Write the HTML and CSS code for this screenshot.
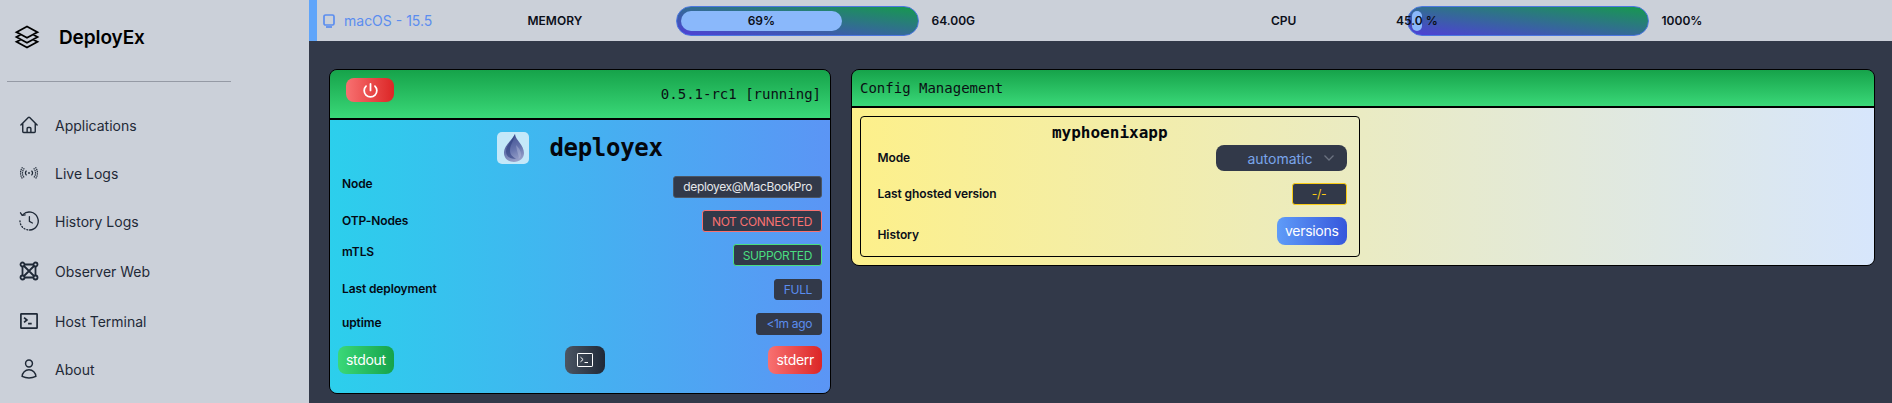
FILE: index.html
```html
<!DOCTYPE html>
<html lang="en">
<head>
<meta charset="utf-8">
<title>DeployEx</title>
<link rel="stylesheet" href="styles.css">
</head>
<body>
<div class="app">
  <aside class="sidebar">
    <div class="brand">
      <svg class="brand-icon" viewBox="0 0 24 24" fill="none" stroke="currentColor" stroke-width="1.6" stroke-linejoin="miter"><path d="M6.429 9.75 2.25 12l4.179 2.25m0-4.5 5.571 3 5.571-3m-11.142 0L2.25 7.5 12 2.25l9.75 5.25-4.179 2.25m0 0L21.75 12l-4.179 2.25m0 0 4.179 2.25L12 21.75 2.25 16.5l4.179-2.25m11.142 0-5.571 3-5.571-3"/></svg>
      <span class="brand-name">DeployEx</span>
    </div>
    <hr class="divider">
    <nav class="nav">
      <a class="nav-item">
        <svg class="nav-icon nav-icon--md" viewBox="0 0 24 24" fill="none" stroke="currentColor" stroke-width="1.7" stroke-linecap="round" stroke-linejoin="round"><path d="m2.25 12 8.954-8.955c.44-.439 1.152-.439 1.591 0L21.75 12M4.5 9.750v10.125c0 .621.504 1.125 1.125 1.125H9.750v-4.875c0-.621.504-1.125 1.125-1.125h2.250c.621 0 1.125.504 1.125 1.125V21h4.125c.621 0 1.125-.504 1.125-1.125V9.750M8.250 21h8.250"/></svg>
        <span>Applications</span>
      </a>
      <a class="nav-item">
        <svg class="nav-icon" viewBox="0 0 20 16" fill="none" stroke="currentColor" stroke-width="1.3"><circle cx="10" cy="8" r="1" fill="currentColor" stroke="none"/><path d="M7.2 5.4a3.8 3.8 0 0 0 0 5.2M12.8 5.4a3.8 3.8 0 0 1 0 5.2"/><path stroke-dasharray="1.6 .7" d="M4.8 2.8a7.6 7.6 0 0 0 0 10.4M15.2 2.8a7.6 7.6 0 0 1 0 10.4"/><path stroke-dasharray="1.6 .7" d="M2.8 1.6a10.5 10.5 0 0 0 0 12.8M17.2 1.6a10.5 10.5 0 0 1 0 12.8"/></svg>
        <span>Live Logs</span>
      </a>
      <a class="nav-item">
        <svg class="nav-icon nav-icon--md" viewBox="0 0 20 20" fill="none" stroke="currentColor" stroke-width="1.3" stroke-linecap="round" stroke-linejoin="round"><path d="M3.9 3.6A9 9 0 1 1 10.6 19"/><path stroke-dasharray="1 2" d="M8.8 18.9A9 9 0 0 1 1 9.4"/><path d="M1.5 1.8 3.2 4.4l3-.6"/><path d="M10.4 5.6v4.800l3 1.600"/></svg>
        <span>History Logs</span>
      </a>
      <a class="nav-item nav-item--tall">
        <svg class="nav-icon nav-icon--md" viewBox="0 0 20 20" fill="none" stroke="currentColor" stroke-width="1.8"><path d="M3.5 3.5h13v13h-13zM3.5 3.5l13 13M16.5 3.5l-13 13"/><circle cx="3.5" cy="3.5" r="2" fill="#cbd0d9"/><circle cx="16.5" cy="3.5" r="2" fill="#cbd0d9"/><circle cx="3.5" cy="16.5" r="2" fill="#cbd0d9"/><circle cx="16.5" cy="16.5" r="2" fill="#cbd0d9"/></svg>
        <span>Observer Web</span>
      </a>
      <a class="nav-item">
        <svg class="nav-icon" viewBox="0 0 20 18" fill="none" stroke="currentColor" stroke-width="1.9"><rect x="1" y="1" width="18" height="16" rx=".6"/><path d="m4.5 5.2 3.2 2.700-3.200 2.700M9 12h4"/></svg>
        <span>Host Terminal</span>
      </a>
      <a class="nav-item">
        <svg class="nav-icon nav-icon--lg" viewBox="0 0 24 24" fill="none" stroke="currentColor" stroke-width="1.6" stroke-linecap="round" stroke-linejoin="round"><path d="M15.75 6a3.75 3.75 0 1 1-7.5 0 3.75 3.75 0 0 1 7.5 0ZM4.501 20.118a7.5 7.5 0 0 1 14.998 0A17.933 17.933 0 0 1 12 21.75c-2.676 0-5.216-.584-7.499-1.632Z"/></svg>
        <span>About</span>
      </a>
    </nav>
  </aside>

  <main class="main">
    <header class="topbar">
      <div class="os">
        <svg class="os-icon" viewBox="0 0 12 14" fill="none" stroke="currentColor" stroke-width="1.7"><rect x="1" y="1" width="10" height="10" rx="1.6"/><path d="M3 13h6"/></svg>
        <span>macOS - 15.5</span>
      </div>
      <div class="stat-label">MEMORY</div>
      <div class="meter"><div class="meter-fill meter-fill--mem"><span>69%</span></div></div>
      <div class="stat-value">64.00G</div>
      <div class="stat-label">CPU</div>
      <div class="meter"><div class="meter-fill meter-fill--cpu"><span>45.0 %</span></div></div>
      <div class="stat-value">1000%</div>
    </header>

    <section class="content">
      <article class="card">
        <div class="card-header card-header--app">
          <button class="power">
            <svg viewBox="0 0 24 24" fill="none" stroke="#fff" stroke-width="2.2" stroke-linecap="round"><path d="M12 3.5v8.5"/><path d="M17.6 6.4a8 8 0 1 1-11.2 0"/></svg>
          </button>
          <span class="version">0.5.1-rc1 [running]</span>
        </div>
        <div class="app-body">
          <div class="app-title">
            <span class="app-logo">
              <svg viewBox="0 0 32 32"><defs><linearGradient id="drop" x1="0.3" y1="0" x2="0.6" y2="1"><stop offset="0" stop-color="#3f4f90"/><stop offset=".55" stop-color="#6674ad"/><stop offset="1" stop-color="#9aa3cb"/></linearGradient></defs><path fill="url(#drop)" d="M18 2c.5 6 9 11 9 19 0 5.500-4.500 9-10 9S7 26.500 7 21C7 13.500 14.500 9 18 2z"/><path fill="#2f3d7e" opacity=".6" d="M18 2c-.5 6-5 10.500-5 16.500 0 4 2.500 6.500 6 8-6.500 1-10-2.500-10-7C9 13 15.500 8.500 18 2z"/><path fill="#c4cce6" opacity=".35" d="M19 13c3 3 5 6 5 9.500 0 2-1 3.500-2.500 4.500 1-3.500-1.500-6-2.500-14z"/></svg>
            </span>
            <h1 class="app-name">deployex</h1>
          </div>
          <div class="row row--top"><span class="label">Node</span><span class="badge badge--node">deployex@MacBookPro</span></div>
          <div class="row"><span class="label">OTP-Nodes</span><span class="badge badge--red">NOT CONNECTED</span></div>
          <div class="row row--top"><span class="label">mTLS</span><span class="badge badge--green">SUPPORTED</span></div>
          <div class="row"><span class="label">Last deployment</span><span class="badge badge--blue">FULL</span></div>
          <div class="row"><span class="label">uptime</span><span class="badge badge--blue">&lt;1m ago</span></div>
          <div class="actions">
            <button class="btn btn--green">stdout</button>
            <button class="btn btn--dark">
              <svg viewBox="0 0 16 14" fill="none" stroke="#fff" stroke-width="1"><rect x=".5" y=".5" width="15" height="13" rx=".6"/><path d="m3.500 4.200 2.600 2.300-2.600 2.300M7.500 9.500h3.500"/></svg>
            </button>
            <button class="btn btn--red">stderr</button>
          </div>
        </div>
      </article>

      <article class="card card--config">
        <div class="card-header card-header--config">Config Management</div>
        <div class="config-body">
          <div class="app-panel">
            <h2 class="panel-title">myphoenixapp</h2>
            <div class="panel-rows">
              <div class="row row--panel"><span class="panel-label panel-label--high">Mode</span>
                <div class="select"><span>automatic</span>
                  <svg viewBox="0 0 12 8" fill="none" stroke="#6b7280" stroke-width="1.3"><path d="m1.500 1.500 4.500 4.500 4.500-4.500"/></svg>
                </div>
              </div>
              <div class="row row--panel"><span class="panel-label">Last ghosted version</span><span class="badge badge--yellow">-/-</span></div>
              <div class="row row--panel"><span class="panel-label panel-label--low">History</span><button class="btn btn--blue">versions</button></div>
            </div>
          </div>
        </div>
      </article>
    </section>
  </main>
</div>
</body>
</html>
```
FILE: styles.css
```css
* { box-sizing: border-box; }
html, body { margin: 0; padding: 0; height: 100%; overflow: hidden; }
body { font-family: Inter, "Liberation Sans", sans-serif; color: #000; background: #323949; }

.app { display: flex; height: 403px; }

/* Sidebar */
.sidebar { width: 309px; flex: none; background: #cbd0d9; color: #1f2937; }
.brand { display: flex; align-items: center; height: 74px; padding-left: 14px; gap: 19px; color: #000; }
.brand-icon { width: 26px; height: 26px; }
.brand-name { font-size: 19px; font-weight: 600; letter-spacing: -.1px; }
.divider { margin: 7px 0 19px 7px; width: 224px; height: 1px; border: 0; background: #959aa5; }
.nav { display: flex; flex-direction: column; }
.nav-item { display: flex; align-items: center; height: 48px; padding-left: 20px; gap: 17px; font-size: 14px; }
.nav-item--tall { height: 52px; }
.nav-icon { width: 18px; height: 18px; flex: none; overflow: visible; }
.nav-icon--md { width: 20px; height: 20px; margin: 0 -1px; }
.nav-icon--lg { width: 22px; height: 22px; margin: 0 -2px; }

/* Main */
.main { flex: 1; min-width: 0; display: flex; flex-direction: column; }

.topbar {
  display: grid;
  grid-template-columns: 210.5px 148.5px 243px 352px 136px 242px 1fr;
  align-items: center;
  height: 41px;
  background: #cbd0d9;
  border-left: 8px solid #60a5fa;
}
.os { display: flex; align-items: center; gap: 9px; padding-left: 6px; color: #5b8def; font-size: 14px; }
.os-icon { width: 12px; height: 14px; }
.stat-label, .stat-value { font-size: 12px; font-weight: 600; color: #0b0f19; }
.stat-value { padding-left: 12.5px; }
.meter {
  height: 30px;
  padding: 4px 4px;
  border: 1px solid #4c78e0;
  border-radius: 15px;
  background: linear-gradient(to top right, #4f3fd8, #16994e);
}
.meter-fill {
  display: flex; justify-content: center; align-items: center;
  height: 20px;
  background: #8ab8fb;
  border-radius: 10px;
  font-size: 12px; font-weight: 600; color: #0b0f19; white-space: nowrap;
}
.meter-fill--mem { width: 69%; }
.meter-fill--cpu { width: 4.2%; }

.content {
  flex: 1;
  display: grid;
  grid-template-columns: 502px 1fr;
  gap: 20px;
  align-items: start;
  padding: 28px 17px 0 20px;
}

/* Cards */
.card { border: 1px solid #000; border-radius: 8px; overflow: hidden; height: 325px; }
.card--config { height: 197px; }
.card-header { background: linear-gradient(to bottom, #16a34a, #3ad878); border-bottom: 2px solid #000; font-family: "DejaVu Sans Mono", monospace; font-size: 14px; color: #0a0f14; }
.card-header--app { height: 50px; display: flex; justify-content: space-between; padding: 8px 9px 0 16px; }
.card-header--config { height: 38px; display: flex; align-items: center; padding-left: 8px; }
.version { padding-top: 8px; }

.power { width: 48px; height: 24px; padding: 0; border: 0; border-radius: 8px; background: linear-gradient(to right, #f87171, #dc2626); display: flex; align-items: center; justify-content: center; }
.power svg { width: 19px; height: 19px; }

.app-body { height: 273px; padding: 12px 8px 0; background: linear-gradient(to right, #2ccfec, #5b95f5); }
.app-title { display: flex; justify-content: center; align-items: center; gap: 20px; height: 32px; margin-bottom: 12px; }
.app-logo { width: 32px; height: 32px; border-radius: 5px; background: #c4e8f9; display: block; }
.app-logo svg { display: block; width: 32px; height: 32px; }
.app-name { margin: 0; font-family: "DejaVu Sans Mono", monospace; font-size: 24px; font-weight: 700; letter-spacing: -.3px; color: #04070d; }

.row { display: flex; justify-content: space-between; align-items: center; height: 22px; margin-bottom: 12.200px; }
.row--top { align-items: flex-start; }
.label { padding: 0 0 2px 4px; font-size: 12px; line-height: 15px; font-weight: 600; letter-spacing: -.12px; color: #040a14; }
.row--top .label { padding-bottom: 0; }

.badge { display: flex; align-items: center; height: 21.500px; padding: 0 9px; border: 1px solid #323949; border-radius: 3px; background: #323949; font-size: 12px; letter-spacing: -.35px; white-space: nowrap; }
.badge--node { color: #e5e7eb; border-color: #4b5563; }
.badge--red { color: #f87171; border-color: #f87171; }
.badge--green { color: #4ade80; border-color: #4ade80; }
.badge--blue { color: #5b8def; }
.badge--yellow { width: 55px; justify-content: center; color: #facc15; border-color: #facc15; }

.actions { display: flex; justify-content: space-between; margin-top: -1px; }
.btn { height: 28px; padding: 0 8px; border: 0; border-radius: 8px; color: #fff; font-family: Inter, sans-serif; font-size: 14px; letter-spacing: -.3px; display: flex; align-items: center; justify-content: center; }
.btn--green { background: linear-gradient(to right, #3ad878, #16a34a); }
.btn--dark { width: 40px; margin-left: 7px; background: linear-gradient(to right, #4b5563, #1f2937); }
.btn--dark svg { width: 16px; height: 14px; }
.btn--red { background: linear-gradient(to right, #f87171, #dc2626); }
.btn--blue { background: linear-gradient(to right, #5f9cf8, #3657dc); }

.config-body { height: 157px; padding: 8px; background: linear-gradient(to right, #fdf08a, #d7e6fc); }
.app-panel { width: 499.500px; height: 141px; border: 1px solid #000; border-radius: 4px; }
.panel-title { margin: 0; height: 28px; line-height: 32px; text-align: center; font-family: "DejaVu Sans Mono", monospace; font-size: 16px; font-weight: 700; color: #04070d; }
.panel-rows { display: flex; flex-direction: column; gap: 12px; padding: 0 12px 0 16.500px; }
.row--panel { height: auto; margin: 0; }
.panel-label { font-size: 12px; line-height: 15px; font-weight: 600; letter-spacing: -.1px; color: #0b0f19; }
.panel-label--low { padding-top: 7px; }
.panel-label--high { padding-bottom: 2px; }
.select { width: 131px; height: 26px; display: flex; align-items: center; justify-content: flex-end; gap: 10px; padding-right: 12px; border-radius: 8px; background: #323949; color: #7aa5ea; font-size: 14px; }
.select svg { width: 12px; height: 8px; }
```
